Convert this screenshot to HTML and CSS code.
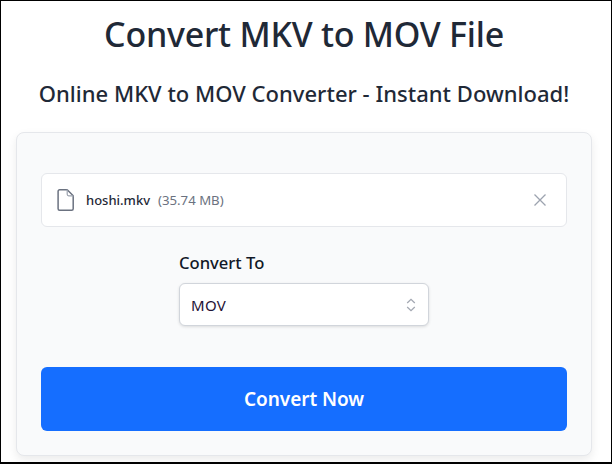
FILE: index.html
```html
<!DOCTYPE html>
<html lang="en">
<head>
<title>Convert MKV to MOV File</title>
<meta charset="utf-8">
<link rel="stylesheet" href="styles.css">
</head>
<body>
<div class="page">
	<h1 class="title">Convert MKV to MOV File</h1>
	<h2 class="subtitle">Online MKV to MOV Converter - Instant Download!</h2>
	<div class="card">
		<div class="file-row">
			<svg class="file-icon" width="24" height="24" viewBox="0 0 24 24" fill="none" stroke="#6b7280" stroke-width="1.5" stroke-linejoin="round" stroke-linecap="round">
				<path d="M5.6 1.8h7.6l6 6v12.9a1.5 1.5 0 0 1-1.5 1.5H5.6a1.5 1.5 0 0 1-1.5-1.5V3.3a1.5 1.5 0 0 1 1.5-1.5z"/>
				<path d="M13.2 1.8v4.5a1.5 1.5 0 0 0 1.5 1.5h4.5" stroke="#9ca3af" stroke-width="1.2"/>
			</svg>
			<span class="file-name">hoshi.mkv</span>
			<span class="file-size">(35.74 MB)</span>
			<svg class="file-close" width="14" height="14" viewBox="0 0 14 14" fill="none" stroke="#9ca3af" stroke-width="1.3">
				<path d="M1.5 1.5l11 11M12.5 1.5l-11 11"/>
			</svg>
		</div>
		<div class="convert-to">
			<label class="convert-label">Convert To</label>
			<div class="select-box">
				<span class="select-value">MOV</span>
				<svg width="10" height="14" viewBox="0 0 10 14" fill="none" stroke="#a3a8b2" stroke-width="1.3">
					<path d="M1.2 5L5 1.4 8.8 5M1.2 9L5 12.6 8.8 9"/>
				</svg>
			</div>
		</div>
		<a class="convert-btn" href="#">Convert Now</a>
	</div>
</div>
</body>
</html>
```

FILE: styles.css
```css
html, body, h1, h2 { margin: 0; padding: 0; }
body { background: #fff; font-family: "Noto Sans", "Open Sans", sans-serif; color: #1f2937; }
a { text-decoration: none; }
.page { width: 612px; height: 464px; box-sizing: border-box; border: 1px solid #000; border-bottom-width: 2px; padding: 0 19px 0 15px; overflow: hidden; display: flex; flex-direction: column; }
.title { font-size: 34px; line-height: 40px; font-weight: 500; letter-spacing: -0.25px; text-align: center; margin-top: 13px; white-space: nowrap; }
.subtitle { font-size: 22px; line-height: 30px; font-weight: 500; letter-spacing: 0.02px; text-align: center; margin-top: 24px; white-space: nowrap; }
.card { height: 324px; box-sizing: border-box; margin-top: 24px; border: 1px solid #e5e7eb; border-radius: 8px; background: #f9fafb; box-shadow: 0 4px 10px rgba(0,0,0,0.08); padding: 40px 24px 24px; display: flex; flex-direction: column; }
.file-row { height: 54px; box-sizing: border-box; border: 1px solid #e5e7eb; border-radius: 6px; background: #fff; display: flex; align-items: center; padding: 0 19px 0 12px; }
.file-icon { flex: none; }
.file-name { font-size: 13px; font-weight: 500; margin-left: 8px; }
.file-size { font-size: 13.2px; color: #6b7280; margin-left: 8px; }
.file-close { margin-left: auto; }
.convert-to { width: 250px; align-self: center; margin-top: 24px; display: flex; flex-direction: column; }
.convert-label { font-size: 16.6px; line-height: 24px; font-weight: 500; color: #111827; }
.select-box { height: 43px; margin-top: 8px; box-sizing: border-box; border: 1px solid #d1d5db; border-radius: 6px; background: #fff; box-shadow: 0 1px 3px rgba(0,0,0,0.12); display: flex; align-items: center; justify-content: space-between; padding: 0 12px 0 11px; }
.select-value { font-size: 15px; line-height: 20px; letter-spacing: 0.3px; color: #1f1235; }
.convert-btn { height: 64px; margin-top: 41px; border-radius: 6px; background: #156eff; color: #fff; font-size: 19px; font-weight: 600; letter-spacing: -0.05px; display: flex; align-items: center; justify-content: center; }
```
